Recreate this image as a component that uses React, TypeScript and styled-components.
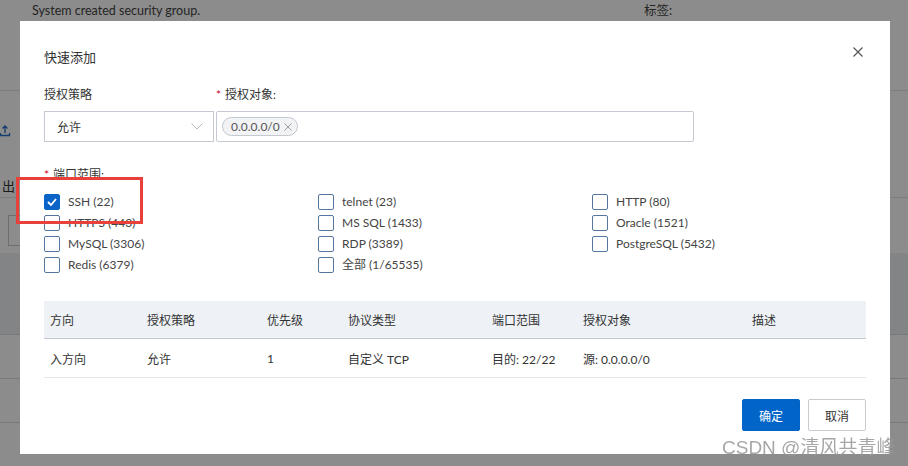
import React from 'react';
import styled, { createGlobalStyle } from 'styled-components';

const GlobalStyle = createGlobalStyle`
  html, body {
    margin: 0;
    padding: 0;
    background: #ffffff;
    overflow: hidden;
  }
  body {
    font-family: 'Lato', 'Noto Sans CJK SC', sans-serif;
    font-size: 12px;
    color: #333333;
  }
`;

const Page = styled.div`
  width: 908px;
  height: 466px;
  display: flex;
  flex-direction: column;
  background: #ffffff;
`;

const PageHead = styled.div`
  height: 94px;
  border-bottom: 1px solid #e3e3e3;
  display: grid;
  grid-template-columns: 612px 1fr;
  padding: 3px 0 0 32px;
  box-sizing: border-box;
  line-height: 16px;
  color: #444;
  font-size: 12.5px;
`;

const PageToolbar = styled.div`
  height: 109px;
  border-bottom: 1px solid #e3e3e3;
  box-sizing: border-box;
  display: flex;
  flex-direction: column;
  justify-content: space-between;
  padding: 34px 0 3px 0;
`;

const ToolbarText = styled.span`
  padding-left: 2px;
  line-height: 16px;
  font-size: 13px;
`;

const PageFilter = styled.div`
  height: 57px;
  box-sizing: border-box;
  padding: 17px 0 0 8px;
`;

const FilterBox = styled.div`
  width: 200px;
  height: 31px;
  border: 1px solid #c9c9c9;
  box-sizing: border-box;
`;

const PageTableHead = styled.div`
  height: 83px;
  background: #eef1f5;
`;

const PageRow = styled.div`
  height: 45px;
  border-top: 1px solid #dcdcdc;
  box-sizing: border-box;
  display: grid;
  grid-template-columns: 104px 190px 242px 242px 1fr;
  padding: 18px 0 0 54px;
  line-height: 16px;
  color: #444;
`;

const Overlay = styled.div`
  position: fixed;
  inset: 0;
  background: rgba(0, 0, 0, 0.45);
`;

const Modal = styled.div`
  position: fixed;
  left: 20px;
  top: 21px;
  width: 870px;
  height: 433px;
  background: #ffffff;
  box-sizing: border-box;
  padding: 26px 24px 0 24px;
  display: flex;
  flex-direction: column;
`;

const TitleRow = styled.div`
  display: flex;
  justify-content: space-between;
  align-items: center;
  height: 20px;
`;

const Title = styled.div`
  font-size: 13px;
  line-height: 20px;
  color: #333;
`;

const Close = styled.div`
  width: 10px;
  height: 10px;
  margin-right: 3px;
  margin-top: -10px;
  display: flex;
`;

const FieldGrid = styled.div`
  margin-top: 18px;
  display: grid;
  grid-template-columns: 170px 478px;
  column-gap: 2px;
  row-gap: 6px;
`;

const Label = styled.div<{ $required?: boolean }>`
  line-height: 20px;
  color: #333;
  &::before {
    content: ${(p) => (p.$required ? "'*'" : 'none')};
    color: #d0021b;
    margin-right: 4px;
  }
`;

const SelectBox = styled.div`
  height: 31px;
  border: 1px solid #c5cad2;
  box-sizing: border-box;
  display: flex;
  align-items: center;
  justify-content: space-between;
  padding: 0 10px 0 12px;
  color: #333;
`;

const InputBox = styled.div`
  height: 31px;
  border: 1px solid #c5cad2;
  border-radius: 2px;
  box-sizing: border-box;
  display: flex;
  align-items: center;
  padding: 0 5px;
`;

const Tag = styled.div`
  height: 19px;
  box-sizing: border-box;
  border: 1px solid #c4c8cf;
  border-radius: 10px;
  background: #f2f3f5;
  display: flex;
  align-items: center;
  gap: 4px;
  padding: 0 5px 0 8px;
  color: #555;
  font-size: 12px;
`;

const PortLabel = styled(Label)`
  margin-top: 23px;
`;

const CheckGrid = styled.div`
  margin-top: 9px;
  display: grid;
  grid-template-columns: repeat(3, 274px);
  grid-auto-flow: column;
  grid-template-rows: repeat(4, 16px);
  row-gap: 5px;
`;

const CheckItem = styled.label`
  display: flex;
  align-items: center;
  gap: 8px;
  height: 16px;
  line-height: 16px;
  color: #444;
  font-size: 12px;
`;

const Box = styled.span<{ $checked?: boolean }>`
  width: 16px;
  height: 16px;
  box-sizing: border-box;
  border-radius: 2px;
  border: 1px solid ${(p) => (p.$checked ? '#0a64c8' : '#55779f')};
  background: ${(p) => (p.$checked ? '#0a64c8' : '#ffffff')};
  display: flex;
  align-items: center;
  justify-content: center;
  flex: none;
`;

const Table = styled.div`
  margin-top: 28px;
`;

const TRow = styled.div<{ $head?: boolean }>`
  display: grid;
  grid-template-columns: 97px 120px 81px 144px 91px 169px 1fr;
  height: ${(p) => (p.$head ? '38px' : '39px')};
  box-sizing: border-box;
  background: ${(p) => (p.$head ? '#eef1f6' : '#ffffff')};
  border-bottom: 1px solid ${(p) => (p.$head ? '#c3c8d0' : '#e4e6ea')};
  align-items: center;
`;

const Cell = styled.div`
  padding-left: 6px;
  color: #333;
  white-space: nowrap;
  font-size: 12px;
`;

const Footer = styled.div`
  margin-top: 21px;
  display: flex;
  justify-content: flex-end;
  gap: 8px;
`;

const Button = styled.button<{ $primary?: boolean }>`
  width: 58px;
  height: 32px;
  border-radius: 2px;
  font-family: inherit;
  font-size: 12px;
  border: 1px solid ${(p) => (p.$primary ? '#0064c8' : '#c8cbd0')};
  background: ${(p) => (p.$primary ? '#0064c8' : '#ffffff')};
  color: ${(p) => (p.$primary ? '#ffffff' : '#333333')};
  padding: 0;
`;

const Highlight = styled.div`
  position: fixed;
  left: 16px;
  top: 177px;
  width: 127px;
  height: 47px;
  border: 3px solid #e8413b;
  box-sizing: border-box;
  pointer-events: none;
`;

const Watermark = styled.div`
  position: fixed;
  left: 722px;
  top: 432px;
  font-family: 'Liberation Sans', 'Noto Sans CJK SC', sans-serif;
  font-size: 19px;
  color: rgba(150, 150, 150, 0.85);
  white-space: nowrap;
`;

const ports: { name: string; checked?: boolean }[] = [
  { name: 'SSH (22)', checked: true },
  { name: 'HTTPS (443)' },
  { name: 'MySQL (3306)' },
  { name: 'Redis (6379)' },
  { name: 'telnet (23)' },
  { name: 'MS SQL (1433)' },
  { name: 'RDP (3389)' },
  { name: '全部 (1/65535)' },
  { name: 'HTTP (80)' },
  { name: 'Oracle (1521)' },
  { name: 'PostgreSQL (5432)' },
];

const headCols = ['方向', '授权策略', '优先级', '协议类型', '端口范围', '授权对象', '描述'];
const rowCols = ['入方向', '允许', '1', '自定义 TCP', '目的: 22/22', '源: 0.0.0.0/0', ''];

export default function App() {
  return (
    <>
      <GlobalStyle />
      <Page>
        <PageHead>
          <span>System created security group.</span>
          <span>标签:</span>
        </PageHead>
        <PageToolbar>
          <svg width="12" height="12" viewBox="0 0 12 12">
            <path d="M5 1v7M2.5 3.5L5 1l2.5 2.5M0.5 8v2.5h9V8" stroke="#2a6fc9" strokeWidth="1.3" fill="none" />
          </svg>
          <ToolbarText>出</ToolbarText>
        </PageToolbar>
        <PageFilter>
          <FilterBox />
        </PageFilter>
        <PageTableHead />
        <PageRow />
        <PageRow />
        <PageRow>
          <span>1</span>
          <span>自定义 TCP</span>
          <span>目的: 9000/9000</span>
          <span>源: 0.0.0.0/0</span>
          <span>minio</span>
        </PageRow>
      </Page>
      <Overlay />
      <Modal>
        <TitleRow>
          <Title>快速添加</Title>
          <Close>
            <svg width="10" height="10" viewBox="0 0 10 10">
              <path d="M0.5 0.5L9.5 9.5M9.5 0.5L0.5 9.5" stroke="#555" strokeWidth="1.2" />
            </svg>
          </Close>
        </TitleRow>
        <FieldGrid>
          <Label>授权策略</Label>
          <Label $required>授权对象:</Label>
          <SelectBox>
            <span>允许</span>
            <svg width="12" height="7" viewBox="0 0 12 7">
              <path d="M0.5 0.5L6 6L11.5 0.5" stroke="#b5b9bf" strokeWidth="1" fill="none" />
            </svg>
          </SelectBox>
          <InputBox>
            <Tag>
              <span>0.0.0.0/0</span>
              <svg width="8" height="8" viewBox="0 0 8 8">
                <path d="M0.5 0.5L7.5 7.5M7.5 0.5L0.5 7.5" stroke="#9a9fa6" strokeWidth="1" />
              </svg>
            </Tag>
          </InputBox>
        </FieldGrid>
        <PortLabel $required>端口范围:</PortLabel>
        <CheckGrid>
          {ports.map((p) => (
            <CheckItem key={p.name}>
              <Box $checked={p.checked}>
                {p.checked && (
                  <svg width="10" height="8" viewBox="0 0 10 8">
                    <path d="M1 4L4 7L9 1" stroke="#fff" strokeWidth="1.8" fill="none" />
                  </svg>
                )}
              </Box>
              <span>{p.name}</span>
            </CheckItem>
          ))}
        </CheckGrid>
        <Table>
          <TRow $head>
            {headCols.map((c) => (
              <Cell key={c}>{c}</Cell>
            ))}
          </TRow>
          <TRow>
            {rowCols.map((c, i) => (
              <Cell key={i}>{c}</Cell>
            ))}
          </TRow>
        </Table>
        <Footer>
          <Button $primary>确定</Button>
          <Button>取消</Button>
        </Footer>
      </Modal>
      <Highlight />
      <Watermark>CSDN @清风共青峰</Watermark>
    </>
  );
}
